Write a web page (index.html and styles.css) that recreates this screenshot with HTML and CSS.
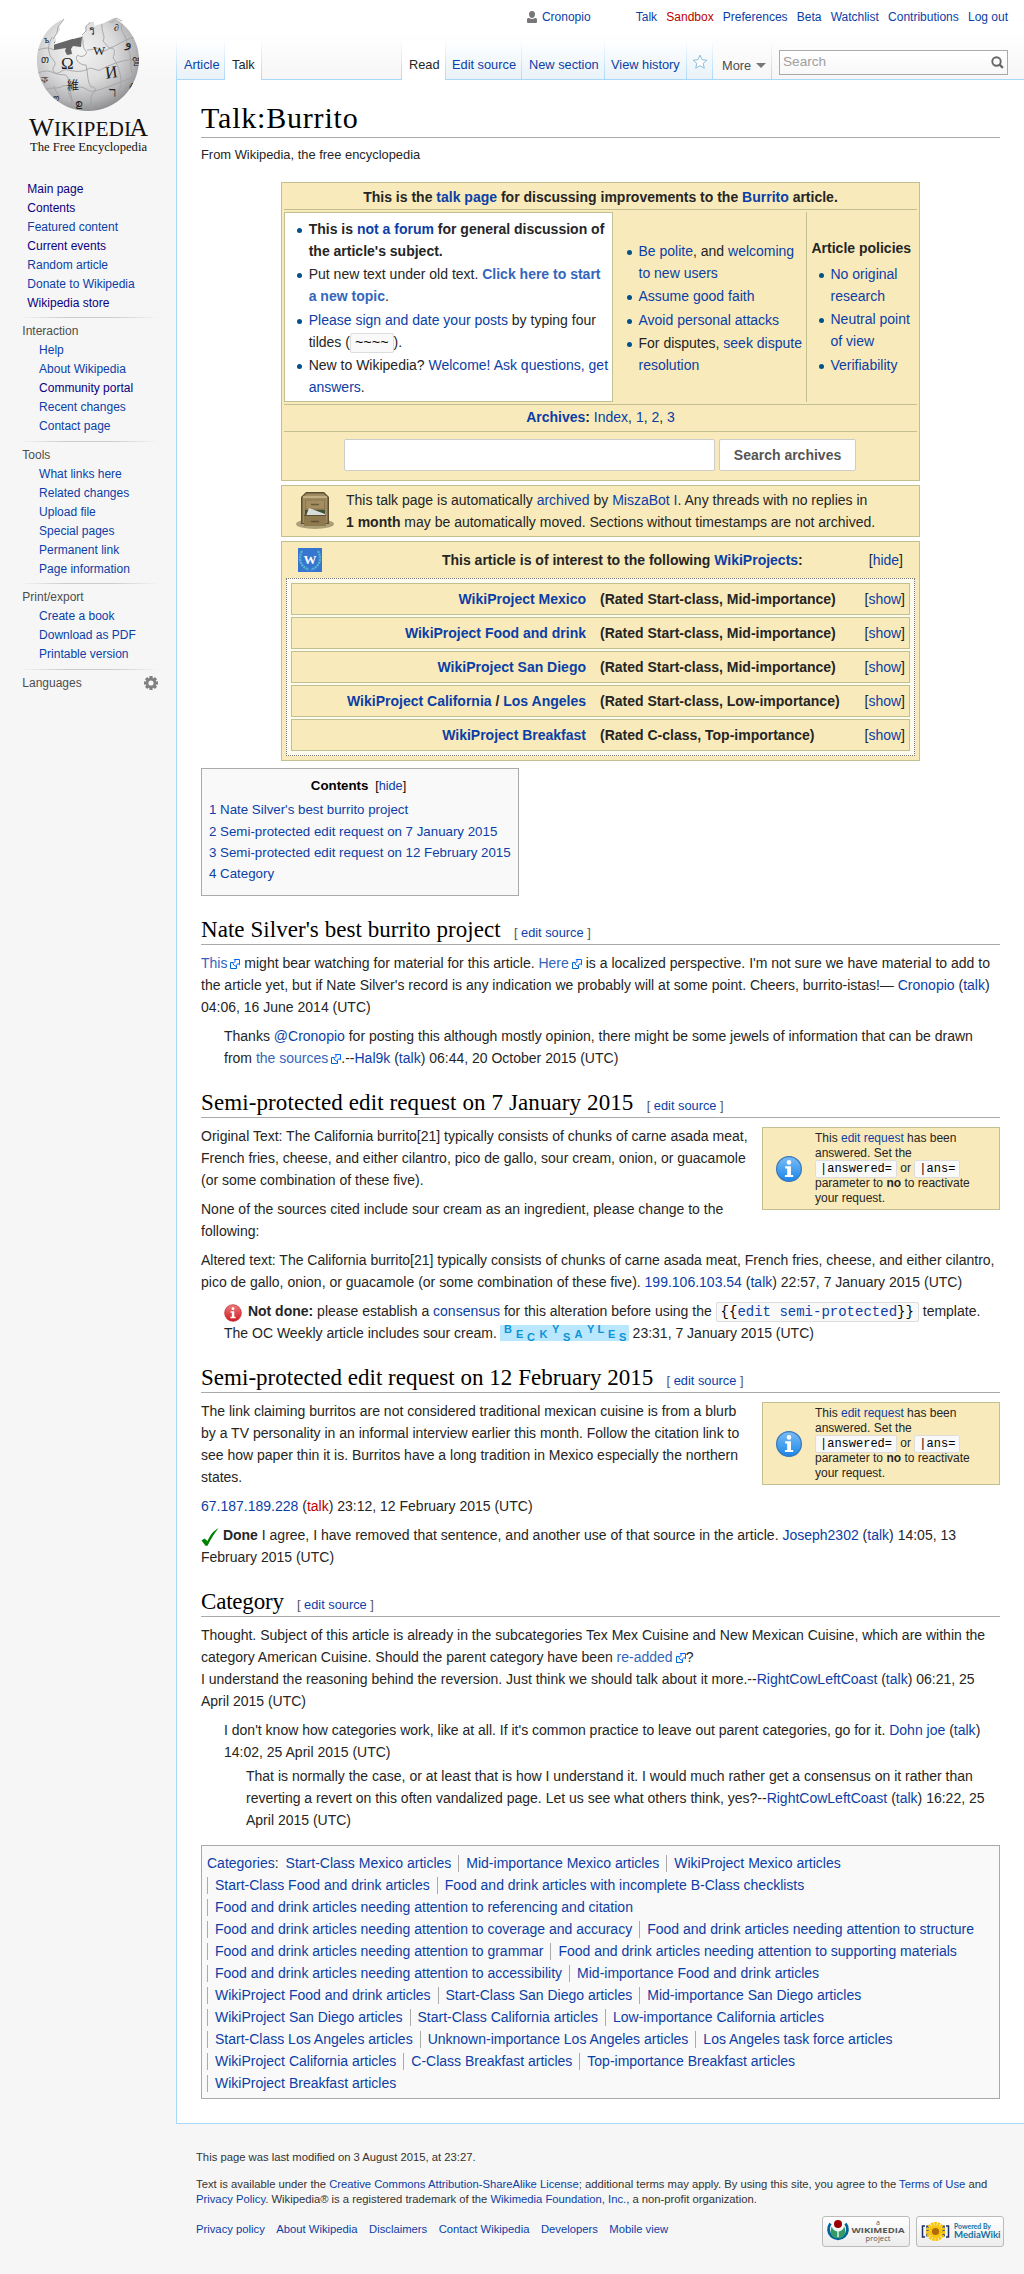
FILE: index.html
```html
<!DOCTYPE html>
<html lang="en">
<head>
<meta charset="utf-8">
<title>Talk:Burrito - Wikipedia, the free encyclopedia</title>
<link rel="stylesheet" href="styles.css">
</head>
<body>
<svg class="defs" width="0" height="0" aria-hidden="true">
  <defs>
    <symbol id="ext" viewBox="0 0 10 10"><path d="M3.500 3.500H.5v6h6v-3" fill="#fff" stroke="#06c"/><path d="M4.200.5h5.300v5.300L8 4.600 5.200 7.300 2.800 4.900 5.400 2z" fill="#fff" stroke="#06f"/></symbol>
    <linearGradient id="blue" x1="0" y1="0" x2="0" y2="1"><stop offset="0" stop-color="#7cbcf5"/><stop offset="1" stop-color="#1a86ea"/></linearGradient>
    <linearGradient id="red" x1="0" y1="0" x2="0" y2="1"><stop offset="0" stop-color="#f0797b"/><stop offset="1" stop-color="#d11a22"/></linearGradient>
    <symbol id="info" viewBox="0 0 28 28"><circle cx="14" cy="14" r="12.400" fill="url(#blue)" stroke="#3a78b8" stroke-width="1.200"/><circle cx="14" cy="7.400" r="2.300" fill="#fff"/><path d="M10.200 11.300h5.800v8.600h2.200v2.200h-8.300v-2.200h2.300v-6.400h-2z" fill="#fff"/></symbol>
    <symbol id="alert" viewBox="0 0 28 28"><circle cx="14" cy="14" r="13" fill="url(#red)" stroke="#b5262b" stroke-width="1"/><circle cx="14" cy="7.400" r="2.300" fill="#fff"/><path d="M10.200 11.300h5.800v8.600h2.200v2.200h-8.300v-2.200h2.300v-6.400h-2z" fill="#fff"/></symbol>
  </defs>
</svg>
<div class="page">
  <aside class="side">
    <svg class="logo" width="135" height="160" viewBox="20 0 135 160">
      <defs>
        <radialGradient id="ball" cx=".42" cy=".36" r=".66"><stop offset="0" stop-color="#f4f4f4"/><stop offset=".5" stop-color="#dcdcdd"/><stop offset=".8" stop-color="#b4b4b6"/><stop offset="1" stop-color="#88888b"/></radialGradient>
        <clipPath id="globe"><path d="M64 19l-5 6 1 5-5 6 1 5-3 4 29-9 4-4-1-5 3-2 1-3 5 0 0 4 10-3 4-2 6-3C129 26 139 42 139 59c0 29-23 52-51 52S37 89 37 61C37 42 48 25 64 19z"/></clipPath>
      </defs>
      <g clip-path="url(#globe)">
        <rect x="36" y="17" width="105" height="95" fill="url(#ball)"/>
        <g fill="none" stroke="#a3a3a6" stroke-width=".9">
          <path d="M38 50q10-4 16 0M52 37q-8 14 2 24c4 4-4 7 0 11 4 5 12 0 14 6 2 8-2 14 4 22 2 5 8 7 12 8"/>
          <path d="M38 73q9-4 16 0c6 2 8-5 14-3 8 2 14 2 20-1 4-3 10 4 14 0 10-5 22-10 37-10"/>
          <path d="M82 36c2 6 0 10 3 14 5 4-4 9-7 5-4 3 0 10 8 10 2 8 1 16 5 22 5-1 6 5 1 7-2 6-1 10 0 16"/>
          <path d="M87 50c8 0 10-4 14 0 3 4 8-3 12-3 8-4 13-8 22-10M102 24c-1 8 4 12 1 17 4 4 6 9 9 7 4 1 2 7 1 10 5 6 7 14 8 22 1 7-3 10-5 18"/>
          <path d="M43 91c8-5 13-1 20-5 8-2 9 4 16 1 8 0 9 6 15 4 10-2 24-8 42-15M122 24c-2 6 2 9 4 15 3 3-3 7 2 10 4 6 2 16 4 24M54 86c1 6 6 8 5 14M72 88c-4 6 2 9-1 17"/>
        </g>
        <path d="M54 42l10-1 3-5 5-1 1 4 9-2-1 10-8-1-2 3 1 5-5 1-2-4 1-3-12 2z" fill="#666"/>
        <g class="glyphs">
          <text x="61" y="69" font-size="17">Ω</text><text x="93" y="55" font-size="13">W</text><text x="105" y="78" font-size="17" transform="rotate(-8 110 72)">И</text>
          <text x="67" y="90" font-size="12">維</text><text x="109" y="97" font-size="15">ר</text>
          <text x="89" y="35" font-size="10">วิ</text><text x="125" y="47" font-size="14">و</text><text x="114" y="31" font-size="10">∂</text>
          <text x="44" y="43" font-size="10">ъ</text><text x="41" y="63" font-size="10">თ</text><text x="41" y="83" font-size="10">ক</text><text x="132" y="65" font-size="9">열</text><text x="129" y="87" font-size="9">م</text><text x="75" y="107" font-size="10">ഉ</text><text x="53" y="101" font-size="8">ო</text>
        </g>
      </g>
      <path d="M53 39l4-6 1-6 6-8M82 35l4-4 0-5 4-3M109 22l4 0 3-4 6 3" fill="none" stroke="#aaa"/>
      <g class="wordmark">
        <text x="29" y="135.500" font-size="26" textLength="25" lengthAdjust="spacingAndGlyphs">W</text>
        <text x="54" y="135.500" font-size="20" textLength="77" lengthAdjust="spacingAndGlyphs">IKIPEDI</text>
        <text x="129.500" y="135.500" font-size="26" textLength="18.500" lengthAdjust="spacingAndGlyphs">A</text>
        <text x="30" y="150.500" font-size="13" textLength="117" lengthAdjust="spacingAndGlyphs">The Free Encyclopedia</text>
      </g>
    </svg>
    <nav class="portal main"><a class="v">Main page</a><a class="v">Contents</a><a>Featured content</a><a class="v">Current events</a><a>Random article</a><a>Donate to Wikipedia</a><a class="v">Wikipedia store</a></nav>
    <nav class="portal"><h3>Interaction</h3><a>Help</a><a>About Wikipedia</a><a class="v">Community portal</a><a>Recent changes</a><a>Contact page</a></nav>
    <nav class="portal"><h3>Tools</h3><a>What links here</a><a>Related changes</a><a>Upload file</a><a>Special pages</a><a>Permanent link</a><a>Page information</a></nav>
    <nav class="portal"><h3>Print/export</h3><a>Create a book</a><a>Download as PDF</a><a>Printable version</a></nav>
    <nav class="portal"><h3 class="lang">Languages
      <svg width="14" height="14" viewBox="-7 -7 14 14"><g fill="#808080"><rect x="-1.600" y="-7" width="3.200" height="14"/><rect x="-7" y="-1.600" width="14" height="3.200"/><rect x="-1.600" y="-7" width="3.200" height="14" transform="rotate(45)"/><rect x="-1.600" y="-7" width="3.200" height="14" transform="rotate(-45)"/><circle r="5.200"/></g><circle r="2.600" fill="#f6f6f6"/></svg></h3></nav>
  </aside>

  <div class="right">
    <header>
      <div class="personal">
        <span class="user"><svg width="10" height="12" viewBox="0 0 10 12"><path d="M5 0a3.200 3.200 0 0 1 3 3.300C8 5.500 6.600 7 5 7S2 5.500 2 3.300A3.200 3.200 0 0 1 5 0zM0 8.500C0 7.300 1 7 2 7q3 2 6 0c1 0 2 .3 2 1.500V11q0 1-1 1H1q-1 0-1-1z" fill="#777"/></svg><a>Cronopio</a></span>
        <a>Talk</a><a class="new">Sandbox</a><a>Preferences</a><a>Beta</a><a>Watchlist</a><a>Contributions</a><a>Log out</a>
      </div>
      <div class="tabs">
        <div class="tab t-article"><a>Article</a></div>
        <div class="tab on t-talk">Talk</div>
        <div class="tab gap"></div>
        <div class="tab on t-read">Read</div>
        <div class="tab t-edit"><a>Edit source</a></div>
        <div class="tab t-new"><a>New section</a></div>
        <div class="tab t-hist"><a>View history</a></div>
        <div class="tab t-star"><svg width="16" height="16" viewBox="0 0 16 16"><path d="M8 1.200l2 4.500 4.900.5-3.700 3.200 1.100 4.800L8 11.700l-4.300 2.500 1.100-4.800L1.100 6.200 6 5.700z" fill="#fff" stroke="#8bbdda"/></svg></div>
        <div class="tab plain t-more">More <svg width="10" height="5" viewBox="0 0 10 5"><path d="M0 0h10L5 5z" fill="#777"/></svg></div>
        <div class="tab plain searchwrap"><div class="search">Search<svg width="13" height="13" viewBox="0 0 13 13"><circle cx="5.500" cy="5.500" r="4.200" fill="none" stroke="#666" stroke-width="1.900"/><path d="M8.600 8.600l3.300 3.300" stroke="#666" stroke-width="2.200"/></svg></div></div>
      </div>
    </header>

    <main>
      <h1>Talk:Burrito</h1>
      <div class="sub">From Wikipedia, the free encyclopedia</div>

      <section class="tmbox talk">
        <div class="thead">This is the <a>talk page</a> for discussing improvements to the <a>Burrito</a> article.</div>
        <div class="cols">
          <div class="c1"><ul>
            <li><b>This is <a>not a forum</a> for general discussion of<br>the article's subject.</b></li>
            <li>Put new text under old text. <b><a class="x">Click here to start<br>a new topic</a></b>.</li>
            <li><a>Please sign and date your posts</a> by typing four<br>tildes (<code>~~~~</code>).</li>
            <li>New to Wikipedia? <a>Welcome!</a> <a>Ask questions, get<br>answers</a>.</li>
          </ul></div>
          <div class="c2"><ul>
            <li><a>Be polite</a>, and <a>welcoming<br>to new users</a></li>
            <li><a>Assume good faith</a></li>
            <li><a>Avoid personal attacks</a></li>
            <li>For disputes, <a>seek dispute<br>resolution</a></li>
          </ul></div>
          <div class="c3"><b>Article policies</b><ul>
            <li><a>No original<br>research</a></li>
            <li><a>Neutral point<br>of view</a></li>
            <li><a>Verifiability</a></li>
          </ul></div>
        </div>
        <div class="arch"><b><a>Archives</a>:</b> <a>Index</a>, <a>1</a>, <a>2</a>, <a>3</a></div>
        <div class="find"><div class="input"></div><div class="btn">Search archives</div></div>
      </section>

      <section class="tmbox bot">
        <svg width="40" height="40" viewBox="0 0 40 40">
          <ellipse cx="20" cy="34" rx="19" ry="5" fill="#8d7f5c" opacity=".7"/>
          <path d="M6 7l5-5h18l5 5v27H6z" fill="#5d4f33"/><path d="M7.500 7l4-3.500h17L32.500 7v26h-25z" fill="#a18b60"/>
          <path d="M8 7h24" stroke="#e0d2a8"/><rect x="10" y="9.500" width="20" height="24" fill="#8b774e"/><rect x="11" y="10.500" width="18" height="8" fill="#a38d61"/>
          <path d="M16 14.500h8" stroke="#6b5a38" stroke-width="1.500"/><path d="M10 20h20v6H10z" fill="#3c5135"/><path d="M11 26l3-8 16 6v3H11z" fill="#d9dcda"/>
          <path d="M9 25h22v11H9z" fill="#8f7a50"/><path d="M9 25.500h22" stroke="#5e4f32"/><path d="M16 31.500h8" stroke="#5e4f32" stroke-width="1.500"/>
        </svg>
        <div>This talk page is automatically <a>archived</a> by <a>MiszaBot I</a>. Any threads with no replies in<br><b>1 month</b> may be automatically moved. Sections without timestamps are not archived.</div>
      </section>

      <section class="tmbox proj">
        <div class="ptitle">
          <svg width="24" height="24" viewBox="0 0 24 24"><rect width="24" height="24" fill="#3676cf"/><path d="M4 3C0 10 2 19 11 21.500M20 3c4 7 2 16-7 18.500" fill="none" stroke="#56b6cf" stroke-width="2.400" stroke-dasharray="2 .8"/><text x="12" y="16" class="wp" textLength="13" lengthAdjust="spacingAndGlyphs">W</text></svg>
          <b>This article is of interest to the following <a>WikiProjects</a>:</b>
          <span>[<a>hide</a>]</span>
        </div>
        <div class="rows">
          <div class="row"><b class="n"><a>WikiProject Mexico</a></b><b>(Rated Start-class, Mid-importance)</b><span>[<a>show</a>]</span></div>
          <div class="row"><b class="n"><a>WikiProject Food and drink</a></b><b>(Rated Start-class, Mid-importance)</b><span>[<a>show</a>]</span></div>
          <div class="row"><b class="n"><a>WikiProject San Diego</a></b><b>(Rated Start-class, Mid-importance)</b><span>[<a>show</a>]</span></div>
          <div class="row"><b class="n"><a>WikiProject California</a> / <a>Los Angeles</a></b><b>(Rated Start-class, Low-importance)</b><span>[<a>show</a>]</span></div>
          <div class="row"><b class="n"><a>WikiProject Breakfast</a></b><b>(Rated C-class, Top-importance)</b><span>[<a>show</a>]</span></div>
        </div>
      </section>

      <nav class="toc">
        <div class="toctitle"><b>Contents</b> <span>[<a>hide</a>]</span></div>
        <a>1 Nate Silver's best burrito project</a>
        <a>2 Semi-protected edit request on 7 January 2015</a>
        <a>3 Semi-protected edit request on 12 February 2015</a>
        <a>4 Category</a>
      </nav>

      <h2><span class="h-nate">Nate Silver's best burrito project</span> <small>[ <a>edit source</a> ]</small></h2>
      <p><a class="x">This<svg class="ext"><use href="#ext"/></svg></a> might bear watching for material for this article. <a class="x">Here<svg class="ext"><use href="#ext"/></svg></a> is a localized perspective. I'm not sure we have material to add to<br>the article yet, but if Nate Silver's record is any indication we probably will at some point. Cheers, burrito-istas!— <a>Cronopio</a> (<a>talk</a>)<br>04:06, 16 June 2014 (UTC)</p>
      <p class="in1">Thanks <a>@Cronopio</a> for posting this although mostly opinion, there might be some jewels of information that can be drawn<br>from <a class="x">the sources<svg class="ext"><use href="#ext"/></svg></a>.--<a>Hal9k</a> (<a>talk</a>) 06:44, 20 October 2015 (UTC)</p>

      <h2><span class="h-jan">Semi-protected edit request on 7 January 2015</span> <small>[ <a>edit source</a> ]</small></h2>
      <aside class="req"><svg width="28" height="28"><use href="#info"/></svg><div>This <a>edit request</a> has been<br>answered. Set the<br><code>|answered=</code> or <code>|ans=</code><br>parameter to <b>no</b> to reactivate<br>your request.</div></aside>
      <p>Original Text: The California burrito[21] typically consists of chunks of carne asada meat,<br>French fries, cheese, and either cilantro, pico de gallo, sour cream, onion, or guacamole<br>(or some combination of these five).</p>
      <p>None of the sources cited include sour cream as an ingredient, please change to the<br>following:</p>
      <p>Altered text: The California burrito[21] typically consists of chunks of carne asada meat, French fries, cheese, and either cilantro,<br>pico de gallo, onion, or guacamole (or some combination of these five). <a>199.106.103.54</a> (<a>talk</a>) 22:57, 7 January 2015 (UTC)</p>
      <p class="in1"><svg class="mark wide" width="18" height="18"><use href="#alert"/></svg> <b>Not done:</b> please establish a <a>consensus</a> for this alteration before using the <code>{{<a>edit semi-protected</a>}}</code> template.<br>The OC Weekly article includes sour cream. <svg class="sig" width="129" height="16" viewBox="0 0 129 16"><rect width="129" height="16" fill="#b9e7fd"/><text x="4 16 27 39.500 52 63 74.500 87 97.500 108 119" y="8 12.600 15.500 12.600 8 15.500 12.600 8 8 12.600 15.500">BECKYSAYLES</text></svg> 23:31, 7 January 2015 (UTC)</p>

      <h2><span class="h-feb">Semi-protected edit request on 12 February 2015</span> <small>[ <a>edit source</a> ]</small></h2>
      <aside class="req"><svg width="28" height="28"><use href="#info"/></svg><div>This <a>edit request</a> has been<br>answered. Set the<br><code>|answered=</code> or <code>|ans=</code><br>parameter to <b>no</b> to reactivate<br>your request.</div></aside>
      <p>The link claiming burritos are not considered traditional mexican cuisine is from a blurb<br>by a TV personality in an informal interview earlier this month. Follow the citation link to<br>see how paper thin it is. Burritos have a long tradition in Mexico especially the northern<br>states.</p>
      <p><a>67.187.189.228</a> (<a class="new">talk</a>) 23:12, 12 February 2015 (UTC)</p>
      <p><svg class="mark" width="18" height="18" viewBox="0 0 18 18"><path d="M.5 12.500l3-2 3 2.500C9 7.500 12.500 2.500 17.500.3 13.500 5 10 11 6.500 17.800H4.500z" fill="#008000"/></svg> <b>Done</b> I agree, I have removed that sentence, and another use of that source in the article. <a>Joseph2302</a> (<a>talk</a>) 14:05, 13<br>February 2015 (UTC)</p>

      <h2><span class="h-cat">Category</span> <small>[ <a>edit source</a> ]</small></h2>
      <p>Thought. Subject of this article is already in the subcategories Tex Mex Cuisine and New Mexican Cuisine, which are within the<br>category American Cuisine. Should the parent category have been <a class="x">re-added<svg class="ext"><use href="#ext"/></svg></a>?<br>I understand the reasoning behind the reversion. Just think we should talk about it more.--<a>RightCowLeftCoast</a> (<a>talk</a>) 06:21, 25<br>April 2015 (UTC)</p>
      <p class="in1">I don't know how categories work, like at all. If it's common practice to leave out parent categories, go for it. <a>Dohn joe</a> (<a>talk</a>)<br>14:02, 25 April 2015 (UTC)</p>
      <p class="in2">That is normally the case, or at least that is how I understand it. I would much rather get a consensus on it rather than<br>reverting a revert on this often vandalized page. Let us see what others think, yes?--<a>RightCowLeftCoast</a> (<a>talk</a>) 16:22, 25<br>April 2015 (UTC)</p>

      <div class="cats">
        <div><span class="lead"><a>Categories</a>:</span><a class="first">Start-Class Mexico articles</a><a>Mid-importance Mexico articles</a><a>WikiProject Mexico articles</a></div>
        <div><a>Start-Class Food and drink articles</a><a>Food and drink articles with incomplete B-Class checklists</a></div>
        <div><a>Food and drink articles needing attention to referencing and citation</a></div>
        <div><a>Food and drink articles needing attention to coverage and accuracy</a><a>Food and drink articles needing attention to structure</a></div>
        <div><a>Food and drink articles needing attention to grammar</a><a>Food and drink articles needing attention to supporting materials</a></div>
        <div><a>Food and drink articles needing attention to accessibility</a><a>Mid-importance Food and drink articles</a></div>
        <div><a>WikiProject Food and drink articles</a><a>Start-Class San Diego articles</a><a>Mid-importance San Diego articles</a></div>
        <div><a>WikiProject San Diego articles</a><a>Start-Class California articles</a><a>Low-importance California articles</a></div>
        <div><a>Start-Class Los Angeles articles</a><a>Unknown-importance Los Angeles articles</a><a>Los Angeles task force articles</a></div>
        <div><a>WikiProject California articles</a><a>C-Class Breakfast articles</a><a>Top-importance Breakfast articles</a></div>
        <div><a>WikiProject Breakfast articles</a></div>
      </div>
    </main>

    <footer>
      <div>This page was last modified on 3 August 2015, at 23:27.</div>
      <div class="legal">Text is available under the <a>Creative Commons Attribution-ShareAlike License</a>; additional terms may apply. By using this site, you agree to the <a>Terms of Use</a> and<br><a>Privacy Policy</a>. Wikipedia® is a registered trademark of the <a>Wikimedia Foundation, Inc.</a>, a non-profit organization.</div>
      <div class="frow">
        <div class="links"><a>Privacy policy</a><a>About Wikipedia</a><a>Disclaimers</a><a>Contact Wikipedia</a><a>Developers</a><a>Mobile view</a></div>
        <div class="badge"><svg width="86" height="29" viewBox="0 0 86 29"><path d="M7.500 6.500a9.500 9.500 0 1 0 15 0" fill="none" stroke="#069" stroke-width="2.800"/><path d="M14.300 21.500c-6-.8-8-6-5.600-12 1 3 3 4.500 5.600 5zM15.700 21.500c6-.8 8-6 5.600-12-1 3-3 4.500-5.600 5z" fill="#396"/><circle cx="15" cy="7" r="4" fill="#900"/><g class="wm"><text x="55" y="7.500" font-size="7">a</text><text x="55" y="16" font-size="7.500" font-weight="700" textLength="53" lengthAdjust="spacingAndGlyphs">WIKIMEDIA</text><text x="55" y="24" font-size="7.500" textLength="25">project</text></g></svg></div>
        <div class="badge"><svg width="86" height="29" viewBox="0 0 86 29"><path d="M8 9H5.500v11H8M29 9h2.500v11H29" fill="none" stroke="#1b2f63" stroke-width="1.500"/><path d="M10.500 8.500v12M26.500 8.500v12" stroke="#1b2f63" stroke-width="2.500" stroke-dasharray="3 1"/><circle cx="18.500" cy="14.500" r="6.800" fill="none" stroke="#f7c60b" stroke-width="5.500" stroke-dasharray="2.200 .6"/><circle cx="18.500" cy="14.500" r="6.200" fill="#f7c60b"/><circle cx="18.500" cy="14.500" r="3.600" fill="#b06a08"/><g class="mw"><text x="37" y="11.500" font-size="6.500" textLength="37" lengthAdjust="spacingAndGlyphs">Powered By</text><text x="37" y="21" font-size="9" textLength="46.500" lengthAdjust="spacingAndGlyphs">MediaWiki</text></g></svg></div>
      </div>
    </footer>
  </div>
</div>
</body>
</html>
```
FILE: styles.css
```css
* { box-sizing: border-box; }
body { margin: 0; width: 1024px; background: #f6f6f6; font: 14px/22px "Liberation Sans", Arial, sans-serif; color: #252525; }
.defs { display: block; position: absolute; }
a { color: #0b3ea6; text-decoration: none; }
a.new { color: #ba0000; }
a.x { color: #36b; }
a.v { color: #0b0080; }
ul { margin: 0; padding: 0 0 0 22px; list-style: none; }
svg { flex: none; }
.page { display: flex; height: 2274px; background: linear-gradient(#fff 0, #fff 40%, #f6f6f6 100%) 0 0 / 100% 80px no-repeat; white-space: nowrap; }

/* sidebar */
.side { width: 176px; flex: none; font-size: 12px; line-height: 19px; }
.logo { display: block; margin: 0 0 15px 20px; }
.portal { margin-left: 19px; width: 140px; padding: 5px 0 4.500px 3.300px; background: linear-gradient(to right, #f6f6f6, #ccc 33%, #ccc 66%, #f6f6f6) 0 0 / 100% 1px no-repeat; }
.portal.main { padding: 5px 0 4px 8.300px; background: none; }
.portal h3 { margin: 0; font: inherit; color: #4d4d4d; height: 19px; }
.portal a { display: block; padding-left: 16.800px; height: 19px; }
.portal.main a { padding-left: 0; }
.portal .lang { display: flex; justify-content: space-between; align-items: center; padding-right: 1px; }

/* header */
.right { flex: 1; width: 848px; }
header { height: 80px; }
.personal { display: flex; justify-content: flex-end; gap: 9.200px; padding: 8px 16px 0 0; height: 40px; font-size: 12px; line-height: 18px; }
.user { display: flex; gap: 4.500px; margin-right: 36px; }
.user svg { margin-top: 3px; }
.tabs { display: flex; height: 40px; font-size: 12.800px; line-height: 49px; border-left: 1px solid #a7d7f9; border-image: linear-gradient(#fff, #a7d7f9) 1; }
.tab { flex: none; padding-left: 7px; border-right: 1px solid; border-bottom: 0; border-image: linear-gradient(#fff, #a7d7f9) 1; background: linear-gradient(#a7d7f9, #a7d7f9) 0 100% / 100% 1px no-repeat, linear-gradient(#fff, #e8f2f8); }
.tab.on { background: #fff; }
.tab.gap, .tab.plain { background: linear-gradient(#a7d7f9, #a7d7f9) 0 100% / 100% 1px no-repeat; }
.t-article { width: 48px; }
.t-talk { width: 37px; }
.gap { width: 140px; }
.t-read { width: 44px; }
.t-edit { width: 76px; padding-left: 6px; }
.t-new { width: 83px; }
.t-hist { width: 82px; padding-left: 6px; }
.t-star { width: 26px; padding: 14px 0 0 5px; line-height: 0; }
.t-more { width: 59px; padding-left: 9px; color: #4d4d4d; line-height: 51px; }
.t-more svg { margin: 0 0 2px 1px; }
.searchwrap { flex: 1; border: 0; padding: 10px 16px 0 7px; }
.search { display: flex; justify-content: space-between; align-items: center; height: 25px; border: 1px solid #aaa; background: linear-gradient(#fff, #f8f8f8); padding: 0 3px 1px 3px; line-height: 22px; color: #a0a0a0; font-size: 13.600px; }

/* article */
main { height: 2044px; background: #fff; border-left: 1px solid #a7d7f9; border-bottom: 1px solid #a7d7f9; padding: 18px 24px 0; }
h1, h2 { font-family: "Liberation Serif", Georgia, serif; font-weight: 400; color: #000; border-bottom: 1px solid #aaa; }
h1 { margin: 0; font-size: 30px; line-height: 39px; height: 40px; letter-spacing: .800px; }
h2 { margin: 18px 0 7px; height: 31px; line-height: 32px; font-size: 23px; }
h2 small { font: 12.800px "Liberation Sans", Arial, sans-serif; color: #555; margin-left: 7.500px; }
.sub { font-size: 12.900px; line-height: 20px; margin: 7px 0 17px; }
.tmbox { width: 639px; margin: 0 0 4px 80px; background: #f8eaba; border: 1px solid #c0c090; }
code { font: 14px/17px "Liberation Mono", monospace; color: #000; background: #f9f9f9; border: 1px solid #ddd; border-radius: 2px; padding: 1px 4px; }

.talk { height: 299px; padding: 2px; }
.thead { height: 25px; line-height: 25px; margin-bottom: 2px; text-align: center; font-weight: 700; border-bottom: 1px solid #c0c090; }
.cols { display: flex; height: 190px; }
.cols li { margin-bottom: 1.400px; position: relative; }
.cols li::before { content: ""; position: absolute; left: -12px; top: 10px; width: 5px; height: 5px; border-radius: 50%; background: #00528c; }
.c1 { width: 329px; background: #fff; border: 1px solid #c0c090; padding: 5px 0 0 1.700px; }
.c2 { width: 194px; padding: 28px 0 0 3.500px; border-right: 1px solid #c0c090; }
.c3 { flex: 1; padding: 25px 0 0 1.500px; }
.c3 b { display: block; margin: 0 0 4px 3px; }
.arch { height: 28px; margin-top: 2px; border: 1px solid #c0c090; border-width: 1px 0; text-align: center; line-height: 25px; }
.find { display: flex; gap: 4px; padding: 7px 0 0 60px; }
.input { width: 371px; height: 32px; background: #fff; border: 1px solid #ccc; border-radius: 2px; }
.btn { width: 137px; height: 32px; background: #fff; border: 1px solid #ccc; border-radius: 2px; text-align: center; font-weight: 700; color: #555; line-height: 31px; }
.bot { height: 52px; display: flex; gap: 11px; padding: 3px 0 0 13px; }
.bot svg { margin-top: 1px; }
.proj { height: 220px; padding: 6px 4px 0; margin-bottom: 7px; }
.ptitle { display: flex; justify-content: space-between; height: 30px; padding: 0 12px 0 12px; line-height: 24px; }
.ptitle b { padding-left: 54px; }
.wp { font: 700 13px "Liberation Serif", serif; fill: #fff; text-anchor: middle; }
.rows { height: 178px; border: 1px dotted #777; background: #fdfaee; padding: 4px; display: grid; gap: 2px; }
.row { height: 32px; border: 1px solid #c0c090; background: #f8eaba; display: flex; line-height: 30px; padding-right: 4px; }
.row .n { width: 294px; text-align: right; margin-right: 14px; }
.row span { margin-left: auto; }

.toc { width: 318px; height: 128px; border: 1px solid #aaa; background: #f9f9f9; font-size: 13.300px; line-height: 21.300px; padding: 6px 7px; }
.toc > a { display: block; }
.toctitle { text-align: center; color: #000; margin-bottom: 2px; padding-right: 3px; }
.toctitle span { font-size: 12.700px; margin-left: 3px; }

p { margin: 0 0 7px; }
p.in1 { margin-left: 23px; }
p.in2 { margin: -5px 0 0 45px; }
p code { line-height: 14px; }
.ext { width: 10px; height: 10px; margin: 0 0 0 3px; vertical-align: -1px; }
.mark { vertical-align: -4px; height: 18px; margin: -2px 0; }
.mark.wide { margin-right: 2px; }
.sig { vertical-align: -3px; height: 16px; margin-left: -1px; overflow: visible; }
.sig text { font: 700 11px "Liberation Sans", Arial, sans-serif; fill: #0c93d8; }
.req { float: right; width: 238px; height: 83px; margin-top: 2px; background: #f8eaba; border: 1px solid #c0c090; display: flex; align-items: center; gap: 12px; padding-left: 12px; font-size: 12px; line-height: 15px; }
.req code { font-size: 12px; line-height: 13px; }
.h-nate { letter-spacing: .050px; }
.h-jan { letter-spacing: .100px; }
.h-feb { letter-spacing: .030px; }
.h-cat { letter-spacing: -.200px; }

.cats { margin-top: 14px; height: 254px; border: 1px solid #aaa; background: #f9f9f9; padding: 6px 5px; }
.cats div { display: flex; align-items: center; height: 22px; }
.cats div > a { border-left: 1px solid #aaa; padding: 0 7px; line-height: 17px; }
.cats div > a.first { border: 0; }

footer { padding: 24px 20px 0; font-size: 11.250px; line-height: 15px; color: #333; margin-top: 2px; }
.legal { margin-top: 12px; }
.frow { display: flex; margin-top: 9px; }
.links { display: flex; gap: 11.500px; flex: 1; padding-top: 2px; line-height: 22px; }
.badge { width: 88px; height: 31px; border: 1px solid #bbb; border-radius: 3px; background: linear-gradient(#fff, #ececec); margin-left: 6px; }
.badge svg { display: block; }
.wm text { font-family: "Open Sans", sans-serif; fill: #555; text-anchor: middle; }
.mw text { font-family: Lato, sans-serif; font-weight: 700; fill: #17719f; }
.wordmark text { font-family: "Liberation Serif", serif; fill: #111; }
.glyphs text { font-family: "Liberation Serif", "DejaVu Sans", "Noto Sans", "Noto Sans CJK JP", serif; fill: #222; }
```
